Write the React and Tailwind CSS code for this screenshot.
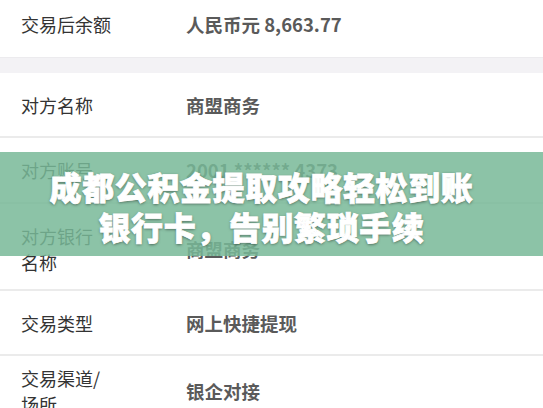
import React from "react";

const font = { fontFamily: '"Noto Sans CJK SC", "Noto Sans", sans-serif' };

function Row({ label, value, h }) {
  return (
    <div className={`flex items-center border-b-2 border-[#ebebeb] bg-white ${h}`}>
      <div className="w-[186px] shrink-0 pl-[21px]">
        <div className="text-[18px] leading-[26px] text-[#333]">{label}</div>
      </div>
      <div className="text-[18.5px] leading-[26px] font-semibold text-[#5a5a5a]">{value}</div>
    </div>
  );
}

export default function App() {
  return (
    <div className="relative w-[543px] h-[408px] overflow-hidden bg-white" style={font}>
      <div className="-mt-[9px]">
        <div className="flex items-center h-[66px] bg-white">
          <div className="w-[186px] shrink-0 pl-[21px]">
            <div className="text-[18px] leading-[26px] text-[#333]">交易后余额</div>
          </div>
          <div className="text-[18.5px] leading-[26px] font-semibold text-[#5a5a5a]">人民币元 8,663.77</div>
        </div>
        <div className="h-[16px] bg-[#f3f2f5] border-t border-[#ecebee]" />
        <Row label="对方名称" value="商盟商务" h="h-[65px]" />
        <Row label="对方账号" value="2001 ****** 4373" h="h-[66px]" />
        <Row
          label={<>对方银行<br />名称</>}
          value="商盟商务"
          h="h-[87px] pt-[4px]"
        />
        <Row label="交易类型" value="网上快捷提现" h="h-[65px]" />
        <Row
          label={<>交易渠道/<br />场所</>}
          value="银企对接"
          h="h-[72px]"
        />
      </div>
      <div className="absolute left-0 right-0 top-[152px] h-[104px] bg-[rgba(120,185,152,0.85)] flex flex-col items-center justify-center pr-[20px] pt-[4px]">
        <div
          className="text-white font-black text-[32px] leading-[40px] text-center tracking-[0.6px] [-webkit-text-stroke:0.8px_white] [text-shadow:0_1px_3px_rgba(0,0,0,0.5)]"
          style={font}
        >
          <div>成都公积金提取攻略轻松到账</div>
          <div>银行卡，告别繁琐手续</div>
        </div>
      </div>
    </div>
  );
}
